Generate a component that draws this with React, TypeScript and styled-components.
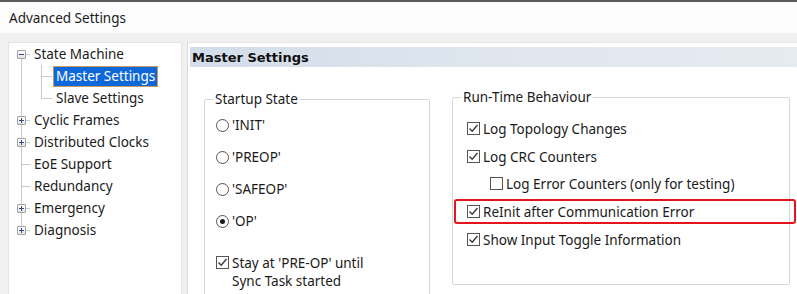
import React from 'react';
import styled, { createGlobalStyle } from 'styled-components';

const GlobalStyle = createGlobalStyle`
  html, body {
    margin: 0;
    padding: 0;
  }
  body {
    background: #f0f0f0;
    font-family: "Noto Sans", "Open Sans", sans-serif;
    font-size: 13.5px;
    color: #1a1a1a;
  }
`;

type Vert = 'full' | 'top' | 'bottom' | 'none';
type Expander = 'plus' | 'minus' | null;

interface TreeItem {
  label: string;
  level: number;
  vert: Vert;
  expander: Expander;
  selected?: boolean;
  // lines passing through from parent levels
  passes?: boolean[];
}

const treeItems: TreeItem[] = [
  { label: 'State Machine', level: 0, vert: 'bottom', expander: 'minus' },
  { label: 'Master Settings', level: 1, vert: 'full', expander: null, selected: true, passes: [true] },
  { label: 'Slave Settings', level: 1, vert: 'top', expander: null, passes: [true] },
  { label: 'Cyclic Frames', level: 0, vert: 'full', expander: 'plus' },
  { label: 'Distributed Clocks', level: 0, vert: 'full', expander: 'plus' },
  { label: 'EoE Support', level: 0, vert: 'full', expander: null },
  { label: 'Redundancy', level: 0, vert: 'full', expander: null },
  { label: 'Emergency', level: 0, vert: 'full', expander: 'plus' },
  { label: 'Diagnosis', level: 0, vert: 'top', expander: 'plus' },
];

const lineColor = '#c9c9c9';

const vertLine = (v: Vert, x: number) => {
  switch (v) {
    case 'full':
      return `linear-gradient(${lineColor}, ${lineColor}) ${x}px 0 / 1px 100% no-repeat`;
    case 'top':
      return `linear-gradient(${lineColor}, ${lineColor}) ${x}px 0 / 1px 50% no-repeat`;
    case 'bottom':
      return `linear-gradient(${lineColor}, ${lineColor}) ${x}px 100% / 1px 50% no-repeat`;
    default:
      return 'none';
  }
};

const Window = styled.div`
  width: 797px;
  height: 294px;
  display: flex;
  flex-direction: column;
  overflow: hidden;
  border-top: 2px solid #5c5c5c;
  box-sizing: border-box;
`;

const TitleBar = styled.div`
  height: 31px;
  flex-shrink: 0;
  display: flex;
  align-items: center;
  padding-left: 9px;
  background: #fcfcfc;
  color: #1a1a1a;
`;

const Body = styled.div`
  flex: 1;
  display: flex;
  gap: 5px;
  padding: 9px 0 0 8px;
  min-height: 0;
`;

const TreePanel = styled.div`
  width: 174px;
  flex-shrink: 0;
  background: #ffffff;
  border: 1px solid #e4e4e4;
  border-bottom: none;
  box-sizing: border-box;
`;

const TreeRow = styled.div`
  display: flex;
  align-items: center;
  height: 22px;
`;

const Guide = styled.span<{ $vert: Vert; $horiz: boolean; $width: number; $x: number }>`
  position: relative;
  flex-shrink: 0;
  width: ${p => p.$width}px;
  height: 22px;
  background: ${p => vertLine(p.$vert, p.$x)}${p =>
    p.$horiz
      ? `, linear-gradient(${lineColor}, ${lineColor}) ${p.$x}px 11px / ${p.$width - p.$x}px 1px no-repeat`
      : ''};
`;

const ExpanderBox = styled.span`
  position: absolute;
  left: 8px;
  top: 7px;
  width: 9px;
  height: 9px;
  box-sizing: border-box;
  border: 1px solid #a0a0a0;
  border-radius: 1px;
  background: linear-gradient(#ffffff, #e4e4e4);
  display: flex;
  align-items: center;
  justify-content: center;
`;

const TreeLabel = styled.span<{ $selected?: boolean }>`
  margin-left: 1px;
  padding: 0 2px 1px;
  line-height: 18px;
  white-space: nowrap;
  border: 1px solid ${p => (p.$selected ? '#c99a5e' : 'transparent')};
  background: ${p => (p.$selected ? '#0f68d9' : 'transparent')};
  color: ${p => (p.$selected ? '#ffffff' : '#1a1a1a')};
`;

const RightPanel = styled.div`
  flex: 1;
  background: #ffffff;
  border-left: 1px solid #dadada;
  border-top: 1px solid #e6e6e6;
  padding: 4px 0 0 2px;
  min-width: 0;
`;

const PanelHeader = styled.div`
  height: 20px;
  display: flex;
  align-items: center;
  padding-left: 2px;
  background: linear-gradient(90deg, #d3dde9 0%, #dfe6ee 50%, #e6ebf1 100%);
  font-family: "DejaVu Sans", "Liberation Sans", sans-serif;
  font-weight: bold;
  font-size: 13px;
  color: #101010;
`;

const Groups = styled.div`
  display: flex;
  align-items: flex-start;
  gap: 22px;
  padding: 23px 0 0 14px;
`;

const GroupBox = styled.fieldset<{ $width: number; $height: number; $offset?: number }>`
  margin: ${p => p.$offset ?? 0}px 0 0;
  padding: 0;
  width: ${p => p.$width}px;
  height: ${p => p.$height}px;
  box-sizing: border-box;
  border: 1px solid #d6d6d6;
  border-radius: 2px;
  min-width: 0;
`;

const Legend = styled.legend`
  margin-left: 8px;
  padding: 0 2px;
  line-height: 18px;
  color: #1a1a1a;
`;

const OptionList = styled.div<{ $gap: number; $pad: number }>`
  display: flex;
  flex-direction: column;
  gap: ${p => p.$gap}px;
  padding: ${p => p.$pad}px 0 0 11px;
`;

const OptionRow = styled.label<{ $indent?: number; $space?: number }>`
  position: relative;
  display: flex;
  align-items: flex-start;
  gap: 3px;
  margin-left: ${p => p.$indent ?? 0}px;
  margin-top: ${p => p.$space ?? 0}px;
  white-space: nowrap;
`;

const RadioCircle = styled.span<{ $checked?: boolean }>`
  flex-shrink: 0;
  width: 13px;
  height: 13px;
  margin-top: 5px;
  box-sizing: border-box;
  border: 1px solid #555555;
  border-radius: 50%;
  background: #ffffff;
  display: flex;
  align-items: center;
  justify-content: center;

  &::after {
    content: "";
    display: ${p => (p.$checked ? 'block' : 'none')};
    width: 5px;
    height: 5px;
    border-radius: 50%;
    background: #1a1a1a;
  }
`;

const CheckBox = styled.span`
  flex-shrink: 0;
  width: 13px;
  height: 13px;
  margin-top: 4px;
  box-sizing: border-box;
  border: 1px solid #555555;
  background: #ffffff;
  display: flex;
  align-items: center;
  justify-content: center;
`;

const OptionText = styled.span`
  line-height: 18px;
  padding-top: 2px;
`;

const Highlight = styled.span`
  position: absolute;
  left: -13px;
  top: -2px;
  width: 342px;
  height: 25px;
  box-sizing: border-box;
  border: 2px solid #e5131b;
  border-radius: 3px;
  pointer-events: none;
`;

const CheckMark = () => (
  <svg width="11" height="11" viewBox="0 0 11 11">
    <path d="M1.5 5.5 L4.2 8.2 L9.5 2" fill="none" stroke="#3a3a3a" strokeWidth="1.4" />
  </svg>
);

const Check: React.FC<{ checked: boolean }> = ({ checked }) => (
  <CheckBox>{checked && <CheckMark />}</CheckBox>
);

const ExpanderIcon: React.FC<{ kind: 'plus' | 'minus' }> = ({ kind }) => (
  <svg width="5" height="5" viewBox="0 0 5 5">
    <rect x="0" y="2" width="5" height="1" fill="#2e4a86" />
    {kind === 'plus' && <rect x="2" y="0" width="1" height="5" fill="#2e4a86" />}
  </svg>
);

const runtimeOptions = [
  { label: 'Log Topology Changes', checked: true, indent: 0 },
  { label: 'Log CRC Counters', checked: true, indent: 0 },
  { label: 'Log Error Counters (only for testing)', checked: false, indent: 23 },
  { label: 'ReInit after Communication Error', checked: true, indent: 0, marked: true },
  { label: 'Show Input Toggle Information', checked: true, indent: 0 },
];

const App: React.FC = () => {
  return (
    <>
      <GlobalStyle />
      <Window>
        <TitleBar>Advanced Settings</TitleBar>
        <Body>
          <TreePanel>
            {treeItems.map(item => (
              <TreeRow key={item.label}>
                {item.passes?.map((p, i) => (
                  <Guide key={i} $vert={p ? 'full' : 'none'} $horiz={false} $width={21} $x={12} />
                ))}
                {item.level === 0 ? (
                  <Guide $vert={item.vert} $horiz $width={21} $x={12}>
                    {item.expander && (
                      <ExpanderBox>
                        <ExpanderIcon kind={item.expander} />
                      </ExpanderBox>
                    )}
                  </Guide>
                ) : (
                  <Guide $vert={item.vert} $horiz $width={22} $x={11} />
                )}
                <TreeLabel $selected={item.selected}>{item.label}</TreeLabel>
              </TreeRow>
            ))}
          </TreePanel>

          <RightPanel>
            <PanelHeader>Master Settings</PanelHeader>
            <Groups>
              <GroupBox $width={226} $height={220}>
                <Legend>Startup State</Legend>
                <OptionList $gap={12} $pad={6}>
                  <OptionRow><RadioCircle /><OptionText>'INIT'</OptionText></OptionRow>
                  <OptionRow><RadioCircle /><OptionText>'PREOP'</OptionText></OptionRow>
                  <OptionRow><RadioCircle /><OptionText>'SAFEOP'</OptionText></OptionRow>
                  <OptionRow><RadioCircle $checked /><OptionText>'OP'</OptionText></OptionRow>
                  <OptionRow $space={10}>
                    <Check checked />
                    <OptionText>
                      Stay at 'PRE-OP' until
                      <br />
                      Sync Task started
                    </OptionText>
                  </OptionRow>
                </OptionList>
              </GroupBox>

              <GroupBox $width={338} $height={197} $offset={-2}>
                <Legend>Run-Time Behaviour</Legend>
                <OptionList $gap={7.7} $pad={12}>
                  {runtimeOptions.map(o => (
                    <OptionRow key={o.label} $indent={o.indent + 3}>
                      <Check checked={o.checked} />
                      <OptionText>{o.label}</OptionText>
                      {o.marked && <Highlight />}
                    </OptionRow>
                  ))}
                </OptionList>
              </GroupBox>
            </Groups>
          </RightPanel>
        </Body>
      </Window>
    </>
  );
};

export default App;
